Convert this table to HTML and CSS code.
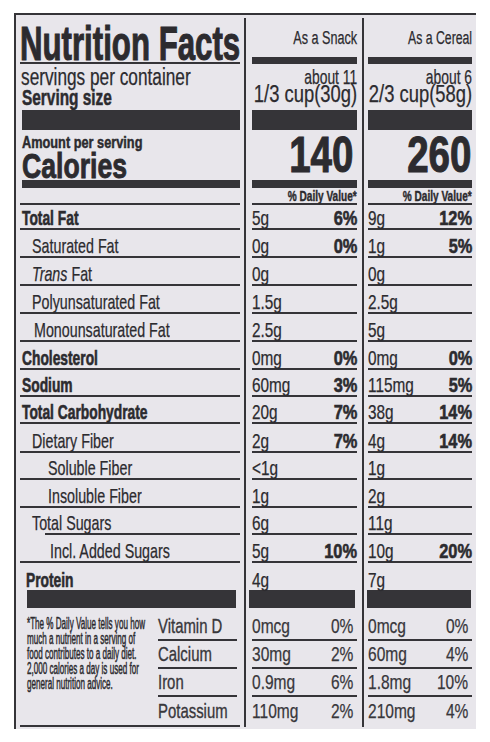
FILE: index.html
```html
<!DOCTYPE html>
<html lang="en">
<head>
<meta charset="utf-8">
<title>Nutrition Facts</title>
<link rel="stylesheet" href="styles.css">
</head>
<body>
<div class="label">
  <div class="divider d1"></div>
  <div class="divider d2"></div>

  <!-- header -->
  <div class="head">
    <h1 class="title"><span class="sq">Nutrition Facts</span></h1>
    <p class="servings"><span class="sq">servings per container</span></p>
    <p class="size"><span class="sq">Serving size</span></p>
  </div>
  <div class="colhead c1 snack">
    <p class="use"><span class="sq r">As a Snack</span></p>
    <div class="colbar"></div>
    <p class="about"><span class="sq r">about 11</span></p>
    <p class="cup"><span class="sq r">1/3 cup(30g)</span></p>
  </div>
  <div class="colhead c2 cereal">
    <p class="use"><span class="sq r">As a Cereal</span></p>
    <div class="colbar"></div>
    <p class="about"><span class="sq r">about 6</span></p>
    <p class="cup"><span class="sq r">2/3 cup(58g)</span></p>
  </div>

  <div class="bar bl"></div>
  <div class="bar b1"></div>
  <div class="bar b2"></div>

  <div class="cal">
    <p class="amount"><span class="sq">Amount per serving</span></p>
    <p class="calories"><span class="sq">Calories</span></p>
  </div>
  <div class="kcal c1"><span class="sq r">140</span></div>
  <div class="kcal c2"><span class="sq r">260</span></div>

  <div class="bar bl"></div>
  <div class="bar b1"></div>
  <div class="bar b2"></div>

  <div class="lab"></div>
  <div class="dv c1"><span class="sq r">% Daily Value*</span></div>
  <div class="dv c2"><span class="sq r">% Daily Value*</span></div>

  <div class="lab b"><span class="sq">Total Fat</span></div>
  <div class="amt c1"><span class="sq">5g</span><b class="sq r pct">6%</b></div>
  <div class="amt c2"><span class="sq">9g</span><b class="sq r pct">12%</b></div>

  <div class="lab i1"><span class="sq">Saturated Fat</span></div>
  <div class="amt c1"><span class="sq">0g</span><b class="sq r pct">0%</b></div>
  <div class="amt c2"><span class="sq">1g</span><b class="sq r pct">5%</b></div>

  <div class="lab i1"><span class="sq"><i>Trans</i> Fat</span></div>
  <div class="amt c1"><span class="sq">0g</span></div>
  <div class="amt c2"><span class="sq">0g</span></div>

  <div class="lab i1"><span class="sq">Polyunsaturated Fat</span></div>
  <div class="amt c1"><span class="sq">1.5g</span></div>
  <div class="amt c2"><span class="sq">2.5g</span></div>

  <div class="lab i1 mono"><span class="sq">Monounsaturated Fat</span></div>
  <div class="amt c1"><span class="sq">2.5g</span></div>
  <div class="amt c2"><span class="sq">5g</span></div>

  <div class="lab b"><span class="sq">Cholesterol</span></div>
  <div class="amt c1"><span class="sq">0mg</span><b class="sq r pct">0%</b></div>
  <div class="amt c2"><span class="sq">0mg</span><b class="sq r pct">0%</b></div>

  <div class="lab b"><span class="sq">Sodium</span></div>
  <div class="amt c1"><span class="sq">60mg</span><b class="sq r pct">3%</b></div>
  <div class="amt c2"><span class="sq">115mg</span><b class="sq r pct">5%</b></div>

  <div class="lab b"><span class="sq">Total Carbohydrate</span></div>
  <div class="amt c1"><span class="sq">20g</span><b class="sq r pct">7%</b></div>
  <div class="amt c2"><span class="sq">38g</span><b class="sq r pct">14%</b></div>

  <div class="lab i1"><span class="sq">Dietary Fiber</span></div>
  <div class="amt c1"><span class="sq">2g</span><b class="sq r pct">7%</b></div>
  <div class="amt c2"><span class="sq">4g</span><b class="sq r pct">14%</b></div>

  <div class="lab i2"><span class="sq">Soluble Fiber</span></div>
  <div class="amt c1"><span class="sq">&lt;1g</span></div>
  <div class="amt c2"><span class="sq">1g</span></div>

  <div class="lab i2"><span class="sq">Insoluble Fiber</span></div>
  <div class="amt c1"><span class="sq">1g</span></div>
  <div class="amt c2"><span class="sq">2g</span></div>

  <div class="lab i1 sugars"><span class="sq">Total Sugars</span></div>
  <div class="amt c1"><span class="sq">6g</span></div>
  <div class="amt c2"><span class="sq">11g</span></div>

  <div class="lab i2 added"><span class="sq">Incl. Added Sugars</span></div>
  <div class="amt c1"><span class="sq">5g</span><b class="sq r pct">10%</b></div>
  <div class="amt c2"><span class="sq">10g</span><b class="sq r pct">20%</b></div>

  <div class="lab b protein last"><span class="sq">Protein</span></div>
  <div class="amt c1 last"><span class="sq">4g</span></div>
  <div class="amt c2 last"><span class="sq">7g</span></div>

  <div class="bar bl bottom"></div>
  <div class="bar b1 bottom"></div>
  <div class="bar b2 bottom"></div>

  <div class="foot"><p class="sq">*The % Daily Value tells you how<br>much a nutrient in a serving of<br>food contributes to a daily diet.<br>2,000 calories a day is used for<br>general nutrition advice.</p></div>

  <div class="vn first"><span class="sq">Vitamin D</span></div>
  <div class="vv c1 first"><span class="sq">0mcg</span><span class="sq r">0%</span></div>
  <div class="vv c2 first"><span class="sq">0mcg</span><span class="sq r">0%</span></div>

  <div class="vn"><span class="sq">Calcium</span></div>
  <div class="vv c1"><span class="sq">30mg</span><span class="sq r">2%</span></div>
  <div class="vv c2"><span class="sq">60mg</span><span class="sq r">4%</span></div>

  <div class="vn"><span class="sq">Iron</span></div>
  <div class="vv c1"><span class="sq">0.9mg</span><span class="sq r">6%</span></div>
  <div class="vv c2"><span class="sq">1.8mg</span><span class="sq r">10%</span></div>

  <div class="vn end"><span class="sq">Potassium</span></div>
  <div class="vv c1 end"><span class="sq">110mg</span><span class="sq r">2%</span></div>
  <div class="vv c2 end"><span class="sq">210mg</span><span class="sq r">4%</span></div>
</div>
</body>
</html>
```

FILE: styles.css
```css
* { box-sizing: border-box; margin: 0; padding: 0; }

:root {
  --ink: #353438;
  --text: #2c2b2f;
  --paper: #e8e6eb;
}

html, body { background: #ffffff; }

body {
  font-family: "Liberation Sans", Arial, sans-serif;
  color: var(--text);
}

.label {
  margin: 13px 0 0 14px;
  width: 462px;
  background: var(--paper);
  border-top: 2px solid var(--ink);
  border-left: 2px solid var(--ink);
  padding-bottom: 2px;
  display: grid;
  grid-template-columns: 137px 91px 2px 116px 2px 112px;
  grid-template-rows:
    95px 20px 50px 8px 17px
    25px 28px 28px 28px 28px 28px 27px 27px 29px 27px 28px 27px 28px
    27px 18px
    33px 28px 28px 30px;
}

/* condensed text helper */
.sq {
  display: inline-block;
  white-space: nowrap;
  transform: scaleX(var(--sx, .72));
  transform-origin: 0 100%;
  -webkit-text-stroke: var(--st, .25px) currentColor;
}
.sq.r { transform-origin: 100% 100%; }

.divider {
  grid-row: 1 / -1;
  background: var(--ink);
  margin-top: 3px;
}
.d1 { grid-column: 3; }
.d2 { grid-column: 5; }

.c1 { grid-column: 4; margin: 0 5px 0 6px; }
.c2 { grid-column: 6; margin: 0 4px; }

/* header */
.head { grid-column: 1 / 3; margin: 0 4px; }
.title {
  font-size: 48px;
  line-height: 37px;
  font-weight: 700;
  margin-top: 10px;
  border-bottom: 2px solid var(--ink);
  --sx: .65;
  --st: 1.1px;
}
.servings { font-size: 23px; line-height: 19px; margin-top: 4px; padding-left: 1px; --sx: .75; }
.size { font-size: 22px; line-height: 20px; font-weight: 700; margin-top: 1px; padding-left: 2px; --sx: .7; --st: .5px; }

.colhead { display: flex; flex-direction: column; }
.colhead p { display: flex; justify-content: flex-end; }
.use { font-size: 18px; line-height: 1; margin-top: 14px; --sx: .7; }
.colbar { height: 7px; margin-top: 10px; background: var(--ink); }
.about { font-size: 21px; line-height: 17px; margin-top: 4px; --sx: .66; }
.cup { font-size: 23px; line-height: 19px; margin-top: 0; --sx: .8; }
.cereal .use { --sx: .68; }

/* bars */
.bar { background: var(--ink); }
.bl { grid-column: 1 / 3; margin: 0 4px 0 6px; }
.b1 { grid-column: 4; margin: 0 5px 0 6px; }
.b2 { grid-column: 6; margin: 0 4px; }
.bl.bottom { margin: 0 8px 0 11px; }
.b1.bottom { margin: 0 7px 0 3px; }
.b2.bottom { margin: 0 5px 0 3px; }

/* calories */
.cal { grid-column: 1 / 3; margin: 0 4px; padding-left: 2px; }
.amount { font-size: 17px; line-height: 14px; font-weight: 700; margin-top: 6px; --sx: .75; --st: .5px; }
.calories { font-size: 35px; line-height: 28px; font-weight: 700; margin-top: 2px; --sx: .76; --st: .9px; }
.kcal {
  display: flex;
  justify-content: flex-end;
  font-size: 50px;
  line-height: 1;
  font-weight: 700;
  --sx: .77;
  --st: 1.1px;
}
.kcal.c1 { padding-right: 4px; }
.kcal.c2 { padding-right: 1px; }

/* daily value header */
.dv {
  display: flex;
  justify-content: flex-end;
  align-items: flex-end;
  font-size: 14px;
  line-height: 1;
  font-weight: 700;
  border-bottom: 2px solid var(--ink);
  --sx: .72;
  --st: .4px;
}

/* nutrient rows */
.lab {
  grid-column: 1 / 3;
  margin: 0 4px;
  padding-left: 2px;
  display: flex;
  align-items: flex-end;
  border-bottom: 2px solid var(--ink);
  font-size: 21px;
  line-height: 1;
  --sx: .68;
}
.lab.b { font-size: 20px; font-weight: 700; --sx: .69; --st: .6px; }
.lab.i1 { padding-left: 12px; }
.lab.mono { padding-left: 14px; }
.lab.i2 { padding-left: 28px; }
.lab.added { padding-left: 30px; }
.lab.sugars {
  border-bottom: none;
  background: linear-gradient(var(--ink), var(--ink)) no-repeat right bottom / calc(100% - 25px) 2px;
  padding-bottom: 2px;
}
.lab.protein { padding-left: 6px; }
.last { border-bottom: none; }

.amt {
  display: flex;
  justify-content: space-between;
  align-items: flex-end;
  border-bottom: 2px solid var(--ink);
  font-size: 21px;
  line-height: 1;
  --sx: .73;
}
.amt.last { border-bottom: none; }
.pct { font-weight: 700; --sx: .78; --st: .6px; }

/* footnote + vitamins */
.foot {
  grid-column: 1;
  grid-row: span 4;
  margin-left: 4px;
  padding: 8px 0 0 7px;
  border-bottom: 2px solid var(--ink);
}
.foot p {
  font-size: 16px;
  line-height: 15px;
  --sx: .505;
  --st: .5px;
  transform-origin: 0 0;
}

.vn {
  grid-column: 2;
  margin: 0 7px 0 5px;
  display: flex;
  align-items: flex-end;
  padding-bottom: 3px;
  border-bottom: 2px solid var(--ink);
  font-size: 21px;
  line-height: 1;
  color: #38373b;
  --sx: .71;
  --st: .35px;
}
.vn.end { margin: 0 4px 0 0; padding-left: 5px; padding-bottom: 4px; }

.vv {
  display: flex;
  justify-content: space-between;
  align-items: flex-end;
  padding-bottom: 3px;
  padding-right: 4px;
  border-bottom: 2px solid var(--ink);
  font-size: 21px;
  line-height: 1;
  color: #38373b;
  --sx: .74;
}
.vv.end { border-bottom: none; padding-bottom: 6px; }
```
